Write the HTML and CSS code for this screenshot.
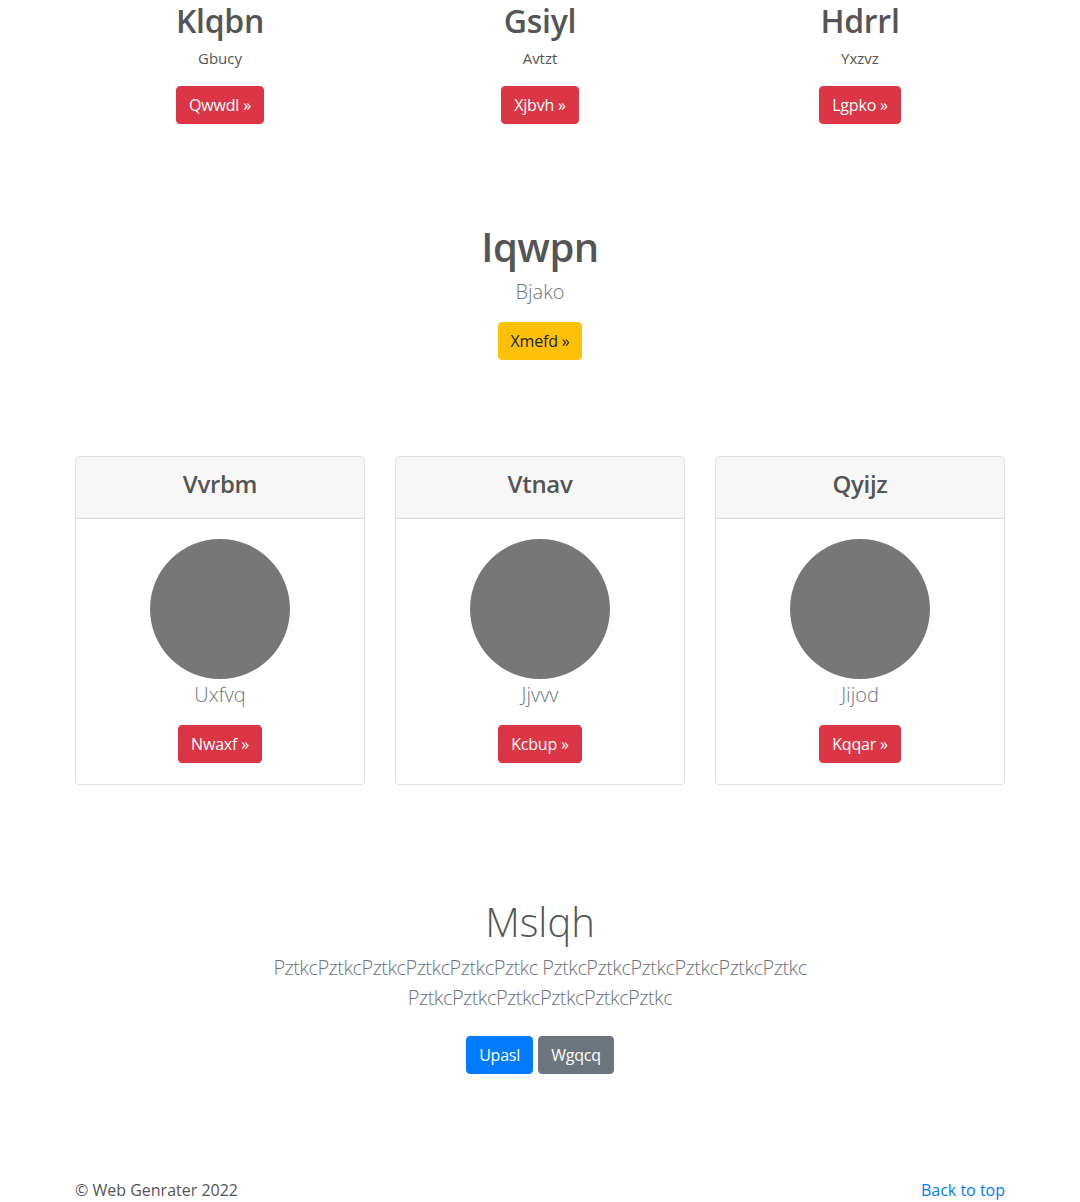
FILE: index.html
```html
<!DOCTYPE html>
<html lang="en">
<head>
<meta charset="utf-8">
<title>Web Genrater</title>
<link rel="stylesheet" href="styles.css">
</head>
<body>
<main>
  <section class="container features">
    <div class="feature">
      <h2 class="feature-title">Klqbn</h2>
      <p class="feature-text">Gbucy</p>
      <p class="btn-line"><a class="btn btn-danger" href="#">Qwwdl &raquo;</a></p>
    </div>
    <div class="feature">
      <h2 class="feature-title">Gsiyl</h2>
      <p class="feature-text">Avtzt</p>
      <p class="btn-line"><a class="btn btn-danger" href="#">Xjbvh &raquo;</a></p>
    </div>
    <div class="feature">
      <h2 class="feature-title">Hdrrl</h2>
      <p class="feature-text">Yxzvz</p>
      <p class="btn-line"><a class="btn btn-danger" href="#">Lgpko &raquo;</a></p>
    </div>
  </section>

  <section class="container hero">
    <h1 class="hero-title">Iqwpn</h1>
    <p class="lead">Bjako</p>
    <p class="btn-line"><a class="btn btn-warning" href="#">Xmefd &raquo;</a></p>
  </section>

  <section class="container cards">
    <div class="card">
      <div class="card-header"><h4 class="card-title">Vvrbm</h4></div>
      <div class="card-body">
        <svg class="avatar" width="140" height="140" viewBox="0 0 140 140"><circle cx="70" cy="70" r="70" fill="#777"/></svg>
        <p class="lead card-lead">Uxfvq</p>
        <a class="btn btn-danger" href="#">Nwaxf &raquo;</a>
      </div>
    </div>
    <div class="card">
      <div class="card-header"><h4 class="card-title">Vtnav</h4></div>
      <div class="card-body">
        <svg class="avatar" width="140" height="140" viewBox="0 0 140 140"><circle cx="70" cy="70" r="70" fill="#777"/></svg>
        <p class="lead card-lead">Jjvvv</p>
        <a class="btn btn-danger" href="#">Kcbup &raquo;</a>
      </div>
    </div>
    <div class="card">
      <div class="card-header"><h4 class="card-title">Qyijz</h4></div>
      <div class="card-body">
        <svg class="avatar" width="140" height="140" viewBox="0 0 140 140"><circle cx="70" cy="70" r="70" fill="#777"/></svg>
        <p class="lead card-lead">Jijod</p>
        <a class="btn btn-danger" href="#">Kqqar &raquo;</a>
      </div>
    </div>
  </section>

  <section class="container jumbo">
    <h1 class="jumbo-title">Mslqh</h1>
    <p class="lead jumbo-lead">PztkcPztkcPztkcPztkcPztkcPztkc PztkcPztkcPztkcPztkcPztkcPztkc PztkcPztkcPztkcPztkcPztkcPztkc</p>
    <p class="jumbo-actions">
      <a class="btn btn-primary" href="#">Upasl</a>
      <a class="btn btn-secondary" href="#">Wgqcq</a>
    </p>
  </section>
</main>

<footer class="container footer">
  <p class="copy">&copy; Web Genrater 2022</p>
  <p class="back"><a href="#">Back to top</a></p>
</footer>
</body>
</html>
```

FILE: styles.css
```css
* {
  box-sizing: border-box;
}

html, body {
  margin: 0;
  padding: 0;
}

body {
  font-family: "Open Sans", "Noto Sans", "Liberation Sans", sans-serif;
  font-size: 16px;
  line-height: 1.5;
  color: #212529;
  background: #fff;
}

h1, h2, h4, p {
  margin-top: 0;
}

.container {
  width: 930px;
  margin: 0 auto;
}

a {
  color: #007bff;
  text-decoration: none;
}

/* Buttons */
.btn {
  display: inline-block;
  padding: 6px 12px;
  font-size: 16px;
  line-height: 24px;
  border: 1px solid transparent;
  border-radius: 4px;
  color: #fff;
  text-align: center;
  vertical-align: middle;
  letter-spacing: -0.2px;
}

.btn-danger {
  background: #dc3545;
  border-color: #dc3545;
}

.btn-warning {
  background: #ffc107;
  border-color: #ffc107;
  color: #212529;
}

.btn-primary {
  background: #007bff;
  border-color: #007bff;
}

.btn-secondary {
  background: #6c757d;
  border-color: #6c757d;
}

.btn-line {
  margin: 0;
}

/* Top features */
.features {
  display: grid;
  grid-template-columns: repeat(3, 1fr);
  column-gap: 30px;
  text-align: center;
  padding-top: 2px;
}

.feature-title {
  font-size: 32px;
  font-weight: 600;
  line-height: 38.4px;
  margin-bottom: 6px;
  color: #555;
  letter-spacing: -0.3px;
}

.feature-text {
  font-size: 15px;
  line-height: 24px;
  margin-bottom: 16px;
  color: #555;
}

/* Hero */
.hero {
  text-align: center;
  padding-top: 99px;
}

.hero-title {
  font-size: 40px;
  font-weight: 600;
  line-height: 48px;
  margin-bottom: 6px;
  color: #555;
  letter-spacing: -0.5px;
}

.lead {
  font-size: 20px;
  font-weight: 300;
  line-height: 30px;
  color: #6c757d;
}

.hero .lead {
  margin-bottom: 15px;
}

/* Cards */
.cards {
  display: grid;
  grid-template-columns: repeat(3, 1fr);
  column-gap: 30px;
  margin-top: 96px;
}

.card {
  border: 1px solid rgba(0, 0, 0, 0.125);
  border-radius: 4px;
  overflow: hidden;
  text-align: center;
}

.card-header {
  background: #f7f7f7;
  border-bottom: 1px solid rgba(0, 0, 0, 0.125);
  padding: 13px 20px 11px;
}

.card-title {
  font-size: 24px;
  font-weight: 600;
  line-height: 28.8px;
  margin-bottom: 8px;
  color: #555;
  letter-spacing: -0.3px;
}

.card-body {
  padding: 20px 20px 21px;
  display: flex;
  flex-direction: column;
  align-items: center;
}

.avatar {
  display: block;
}

.card-lead {
  margin-top: 1px;
  margin-bottom: 15px;
}

/* Jumbo */
.jumbo {
  text-align: center;
  margin-top: 113px;
}

.jumbo-title {
  font-size: 40px;
  font-weight: 300;
  line-height: 48px;
  margin-bottom: 7px;
  color: #555;
}

.jumbo-lead {
  max-width: 610px;
  margin: 0 auto 23px;
  letter-spacing: -0.55px;
}

.jumbo-actions {
  margin: 0;
  display: flex;
  justify-content: center;
  gap: 5px;
}

/* Footer */
.footer {
  display: flex;
  justify-content: space-between;
  margin-top: 104px;
  padding-bottom: 48px;
  color: #555;
  font-size: 16px;
}

.footer p {
  margin: 0;
}
```
